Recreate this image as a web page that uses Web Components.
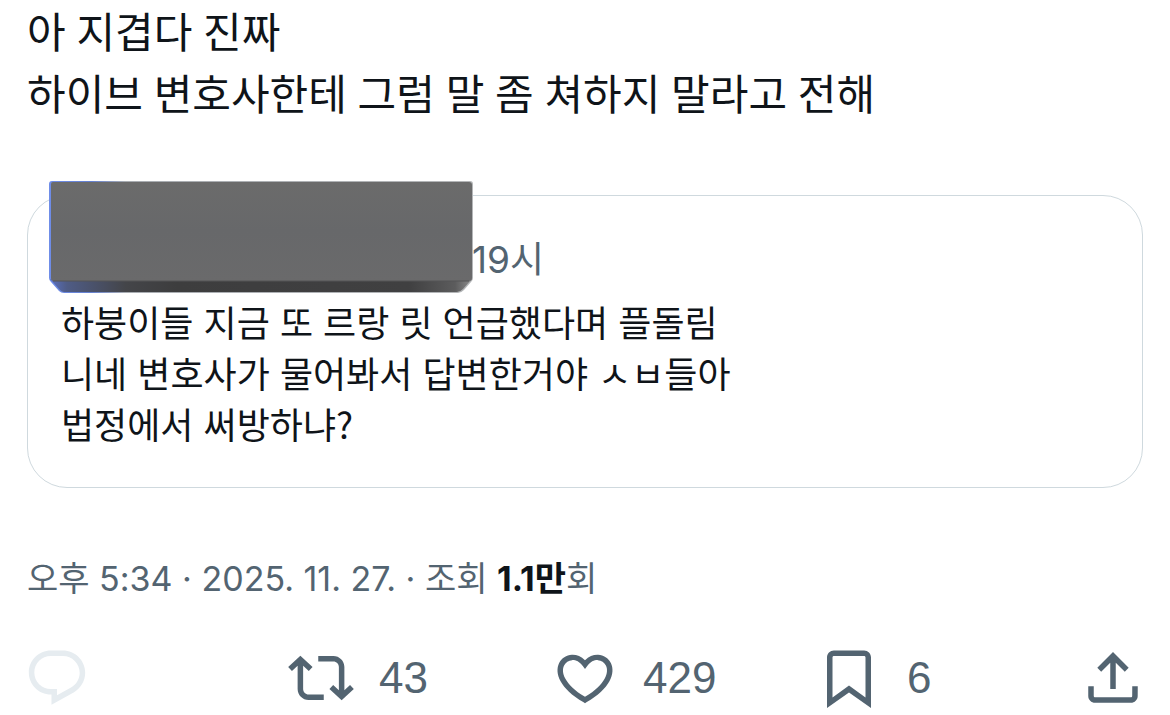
<!DOCTYPE html>
<html lang="ko">
<head>
<meta charset="utf-8">
<meta name="viewport" content="width=device-width, initial-scale=1">
<title>게시물</title>
<style>
  body {
    margin: 0;
    background: #fff;
    color: #0f1419;
    font-family: "Noto Sans CJK KR", sans-serif;
    --muted: #536471;
    --line: #cfd9de;
    --body: Lato, "Noto Sans CJK KR", sans-serif;
    --latin: Inter, "Noto Sans CJK KR", sans-serif;
    --count: "Liberation Sans", sans-serif;
  }
</style>
</head>
<body>
<post-detail>
  <post-text>아 지겹다 진짜<br>하이브 변호사한테 그럼 말 좀 쳐하지 말라고 전해</post-text>
  <quoted-post time="19시">하붕이들 지금 또 르랑 릿 언급했다며 플돌림<br>니네 변호사가 물어봐서 답변한거야 ㅅㅂ들아<br>법정에서 써방하냐?</quoted-post>
  <post-meta date="오후 5:34 · 2025. 11. 27." views="1.1만"></post-meta>
  <post-actions>
    <post-action icon="reply" label="답글" disabled></post-action>
    <post-action icon="repost" label="재게시" count="43"></post-action>
    <post-action icon="like" label="마음에 들어요" count="429"></post-action>
    <post-action icon="bookmark" label="북마크" count="6"></post-action>
    <post-action icon="share" label="공유하기"></post-action>
  </post-actions>
</post-detail>

<script>
const shadow = (el, html) => {
  el.attachShadow({ mode: "open" }).innerHTML = html;
};

customElements.define("post-detail", class extends HTMLElement {
  constructor() {
    super();
    shadow(this, `
      <style>
        :host { display: block; }
        article { display: flex; flex-direction: column; }
      </style>
      <article><slot></slot></article>`);
  }
});

customElements.define("post-text", class extends HTMLElement {
  constructor() {
    super();
    shadow(this, `
      <style>
        :host { display: block; padding: 1px 27px 0; }
        p { margin: 0; font: 42px/62px var(--body); }
      </style>
      <p><slot></slot></p>`);
  }
});

customElements.define("redaction-block", class extends HTMLElement {
  constructor() {
    super();
    shadow(this, `
      <style>
        :host { display: block; }
        svg { display: block; width: 100%; height: 100%; }
      </style>
      <svg viewBox="0 0 425 112" aria-hidden="true">
        <defs>
          <linearGradient id="face" x1="0" y1="0" x2="0" y2="1">
            <stop offset="0" stop-color="#6b6b6b"/>
            <stop offset="0.5" stop-color="#67686a"/>
            <stop offset="1" stop-color="#6a6a6b"/>
          </linearGradient>
          <linearGradient id="bevel" x1="0" y1="0" x2="1" y2="0">
            <stop offset="0" stop-color="#5a70c0"/>
            <stop offset="0.04" stop-color="#4f5c86"/>
            <stop offset="0.18" stop-color="#444549"/>
            <stop offset="0.3" stop-color="#3d3d3e"/>
            <stop offset="0.85" stop-color="#404041"/>
            <stop offset="0.96" stop-color="#5c5c5d"/>
            <stop offset="1" stop-color="#8c8c8c"/>
          </linearGradient>
          <linearGradient id="edge" x1="0" y1="0" x2="1" y2="0">
            <stop offset="0" stop-color="#6f8de8"/>
            <stop offset="0.1" stop-color="#6480d0"/>
            <stop offset="0.18" stop-color="#a9adb2"/>
            <stop offset="1" stop-color="#b4b6b8"/>
          </linearGradient>
        </defs>
        <path d="M3 0H421Q424 0 424 3V97Q424 99 422 101L415 109Q412 112 409 112H15Q12 112 10 110L2 101Q0 99 0 97V3Q0 0 3 0Z" fill="url(#edge)"/>
        <path d="M1 98L423 98L414 108Q411 111 408 111H15Q13 111 11 109Z" fill="url(#bevel)"/>
        <path d="M4 1H420Q423 1 423 4V97Q423 100 420 100H5Q2 100 2 97V3Q2 1 4 1Z" fill="url(#face)"/>
        <path d="M4 100H420" stroke="#555556"/>
      </svg>`);
  }
});

customElements.define("quoted-post", class extends HTMLElement {
  constructor() {
    super();
    shadow(this, `
      <style>
        :host { display: block; padding: 70px 27px 0; }
        section { position: relative; border: 1px solid var(--line); border-radius: 40px; padding: 38px 33px; }
        redaction-block { position: absolute; left: 21px; top: -15px; width: 425px; height: 112px; }
        header { display: flex; padding-left: 411px; font: 37px/52px var(--latin); color: var(--muted); }
        p { margin: 0; padding-top: 10px; font-size: 36px; line-height: 51px; }
      </style>
      <section>
        <header><time></time></header>
        <redaction-block></redaction-block>
        <p><slot></slot></p>
      </section>`);
    this.shadowRoot.querySelector("time").textContent = this.getAttribute("time");
  }
});

customElements.define("post-meta", class extends HTMLElement {
  constructor() {
    super();
    shadow(this, `
      <style>
        :host { display: block; padding: 66px 27px 0; color: var(--muted); }
        div { font: 34px/50px var(--latin); }
        b { color: #0f1419; font-weight: 700; }
      </style>
      <div><time></time> · 조회 <b></b>회</div>`);
    this.shadowRoot.querySelector("time").textContent = this.getAttribute("date");
    this.shadowRoot.querySelector("b").textContent = this.getAttribute("views");
  }
});

customElements.define("post-actions", class extends HTMLElement {
  constructor() {
    super();
    shadow(this, `
      <style>
        :host { display: grid; grid-template-columns: repeat(4, 1fr) auto; padding: 41px 24px 0; }
      </style>
      <slot></slot>`);
  }
});

const ICONS = {
  reply: "M1.751 10c0-4.42 3.584-8 8.005-8h4.366c4.49 0 8.129 3.64 8.129 8.13 0 2.96-1.607 5.68-4.196 7.11l-8.054 4.46v-3.69h-.067c-4.49.1-8.183-3.51-8.183-8.01zm8.005-6c-3.317 0-6.005 2.69-6.005 6 0 3.37 2.77 6.08 6.138 6.01l.351-.01h1.761v2.3l5.087-2.81c1.951-1.08 3.163-3.13 3.163-5.36 0-3.39-2.744-6.13-6.129-6.13H9.756z",
  repost: "M4.5 3.88l4.432 4.14-1.364 1.46L5.5 7.55V16c0 1.1.896 2 2 2H13v2H7.5c-2.209 0-4-1.79-4-4V7.55L1.432 9.48.068 8.02 4.5 3.88zM16.5 6H11V4h5.5c2.209 0 4 1.79 4 4v8.45l2.068-1.93 1.364 1.46-4.432 4.14-4.432-4.14 1.364-1.46 2.068 1.93V8c0-1.1-.896-2-2-2z",
  like: "M16.697 5.5c-1.222-.06-2.679.51-3.89 2.16l-.805 1.09-.806-1.09C9.984 6.01 8.526 5.44 7.304 5.5c-1.243.07-2.349.78-2.91 1.91-.552 1.12-.633 2.78.479 4.82 1.074 1.97 3.257 4.27 7.129 6.61 3.87-2.34 6.052-4.64 7.126-6.61 1.111-2.04 1.03-3.7.477-4.82-.561-1.13-1.666-1.84-2.908-1.91zm4.187 7.69c-1.351 2.48-4.001 5.12-8.379 7.67l-.503.3-.504-.3c-4.379-2.55-7.029-5.19-8.382-7.67-1.36-2.5-1.41-4.86-.514-6.67.887-1.79 2.647-2.91 4.601-3.01 1.651-.09 3.368.56 4.798 2.01 1.429-1.45 3.146-2.1 4.796-2.01 1.954.1 3.714 1.22 4.601 3.01.896 1.81.846 4.17-.514 6.67z",
  bookmark: "M4 4.5C4 3.12 5.119 2 6.5 2h11C18.881 2 20 3.12 20 4.5v18.44l-8-5.71-8 5.71V4.5zM6.5 4c-.276 0-.5.22-.5.5v14.56l6-4.29 6 4.29V4.5c0-.28-.224-.5-.5-.5h-11z",
  share: "M12 2.59l5.7 5.7-1.41 1.42L13 6.41V16h-2V6.41l-3.3 3.3-1.41-1.42L12 2.59zM21 15l-.02 3.51c0 1.38-1.12 2.49-2.5 2.49H5.5C4.11 21 3 19.88 3 18.5V15h2v3.5c0 .28.22.5.5.5h12.98c.28 0 .5-.22.5-.5L19 15h2z"
};

customElements.define("post-action", class extends HTMLElement {
  constructor() {
    super();
    shadow(this, `
      <style>
        :host { display: block; }
        button {
          display: flex; align-items: center; gap: 25px;
          margin: 0; padding: 0; border: 0; background: none;
          color: var(--muted); font: 44px/66px var(--count); cursor: pointer;
        }
        button:disabled { color: #e6ecf0; cursor: default; }
        svg { display: block; width: 66px; height: 66px; fill: currentColor; }
      </style>
      <button type="button">
        <svg viewBox="0 0 24 24" aria-hidden="true"><path d="${ICONS[this.getAttribute("icon")]}"/></svg>
      </button>`);
    const button = this.shadowRoot.querySelector("button");
    const count = this.getAttribute("count");
    button.disabled = this.hasAttribute("disabled");
    button.setAttribute("aria-label", [this.getAttribute("label"), count].filter(Boolean).join(" "));
    if (count) {
      const span = document.createElement("span");
      span.textContent = count;
      button.append(span);
    }
  }
});
</script>
</body>
</html>
